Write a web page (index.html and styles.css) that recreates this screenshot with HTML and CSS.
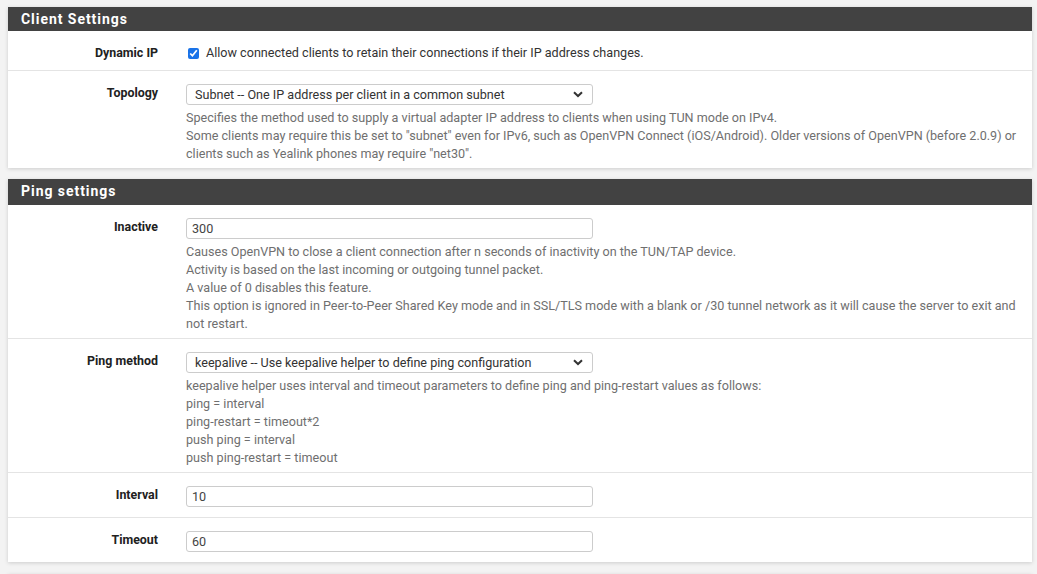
FILE: index.html
```html
<!DOCTYPE html>
<html>
<head>
<meta charset="utf-8">
<link rel="stylesheet" href="styles.css">
</head>
<body>
<div class="page">
  <section class="panel">
    <h2 class="panel-heading">Client Settings</h2>
    <div class="panel-body">
      <div class="row row-check">
        <div class="label">Dynamic IP</div>
        <div class="content">
          <label class="check"><input type="checkbox" checked> Allow connected clients to retain their connections if their IP address changes.</label>
        </div>
      </div>
      <div class="row">
        <div class="label">Topology</div>
        <div class="content">
          <div class="select">
            <span class="select-text">Subnet -- One IP address per client in a common subnet</span>
            <svg class="chevron" width="10" height="7" viewBox="0 0 10 7"><path d="M1 1.2 L5 5 L9 1.2" fill="none" stroke="#333" stroke-width="2"/></svg>
          </div>
          <div class="help">Specifies the method used to supply a virtual adapter IP address to clients when using TUN mode on IPv4.<br>Some clients may require this be set to "subnet" even for IPv6, such as OpenVPN Connect (iOS/Android). Older versions of OpenVPN (before 2.0.9) or clients such as Yealink phones may require "net30".</div>
        </div>
      </div>
    </div>
  </section>

  <section class="panel">
    <h2 class="panel-heading">Ping settings</h2>
    <div class="panel-body">
      <div class="row">
        <div class="label">Inactive</div>
        <div class="content">
          <div class="input">300</div>
          <div class="help">Causes OpenVPN to close a client connection after n seconds of inactivity on the TUN/TAP device.<br>Activity is based on the last incoming or outgoing tunnel packet.<br>A value of 0 disables this feature.<br>This option is ignored in Peer-to-Peer Shared Key mode and in SSL/TLS mode with a blank or /30 tunnel network as it will cause the server to exit and not restart.</div>
        </div>
      </div>
      <div class="row">
        <div class="label">Ping method</div>
        <div class="content">
          <div class="select">
            <span class="select-text">keepalive -- Use keepalive helper to define ping configuration</span>
            <svg class="chevron" width="10" height="7" viewBox="0 0 10 7"><path d="M1 1.2 L5 5 L9 1.2" fill="none" stroke="#333" stroke-width="2"/></svg>
          </div>
          <div class="help">keepalive helper uses interval and timeout parameters to define ping and ping-restart values as follows:<br>ping = interval<br>ping-restart = timeout*2<br>push ping = interval<br>push ping-restart = timeout</div>
        </div>
      </div>
      <div class="row">
        <div class="label">Interval</div>
        <div class="content">
          <div class="input">10</div>
        </div>
      </div>
      <div class="row">
        <div class="label">Timeout</div>
        <div class="content">
          <div class="input">60</div>
        </div>
      </div>
    </div>
  </section>

  <section class="panel">
    <div class="panel-heading"></div>
  </section>
</div>
</body>
</html>
```

FILE: styles.css
```css
* { box-sizing: border-box; }
html, body {
  margin: 0;
  padding: 0;
  background: #f3f3f3;
  font-family: Roboto, "Liberation Sans", sans-serif;
  font-size: 12.6px;
  color: #333;
  overflow: hidden;
}
.page {
  padding: 7px 5px 0 8px;
}
.panel {
  background: #fff;
  box-shadow: 0 1px 4px rgba(0, 0, 0, 0.16);
  margin-bottom: 11px;
}
.panel:nth-child(2) { margin-bottom: 12px; }
.panel-heading {
  margin: 0;
  background: #424242;
  color: #fff;
  font-size: 14px;
  font-weight: bold;
  letter-spacing: 0.95px;
  height: 24px;
  line-height: 24px;
  padding: 0 13px;
}
.panel:nth-child(2) .panel-heading { height: 26px; line-height: 25px; }
.row {
  display: grid;
  grid-template-columns: 150px 1fr;
  column-gap: 28px;
  padding: 13px 12px 10px 0;
  border-top: 1px solid #e4e4e4;
}
.row:first-child { border-top: none; }
.row-check { padding-bottom: 8px; }
.label {
  text-align: right;
  font-weight: bold;
  font-size: 12.4px;
  color: #212121;
  line-height: 18px;
}
.content { min-width: 0; }
.check {
  display: flex;
  align-items: center;
  line-height: 18px;
  color: #333;
}
.check input {
  margin: 0 7px 0 2px;
  width: 11px;
  height: 11px;
  accent-color: #1a73e8;
}
.select, .input {
  width: 407px;
  height: 21px;
  border: 1px solid #ccc;
  border-radius: 3px;
  background: #fff;
  display: flex;
  align-items: center;
  color: #333;
  line-height: 18px;
}
.select {
  padding: 0 9px 0 8px;
  justify-content: space-between;
}
.input {
  padding: 0 5px;
  color: #444;
}
.chevron { flex: none; }
.help {
  margin: 4px 0 -5px;
  color: #6f6f6f;
  line-height: 18px;
}
```
